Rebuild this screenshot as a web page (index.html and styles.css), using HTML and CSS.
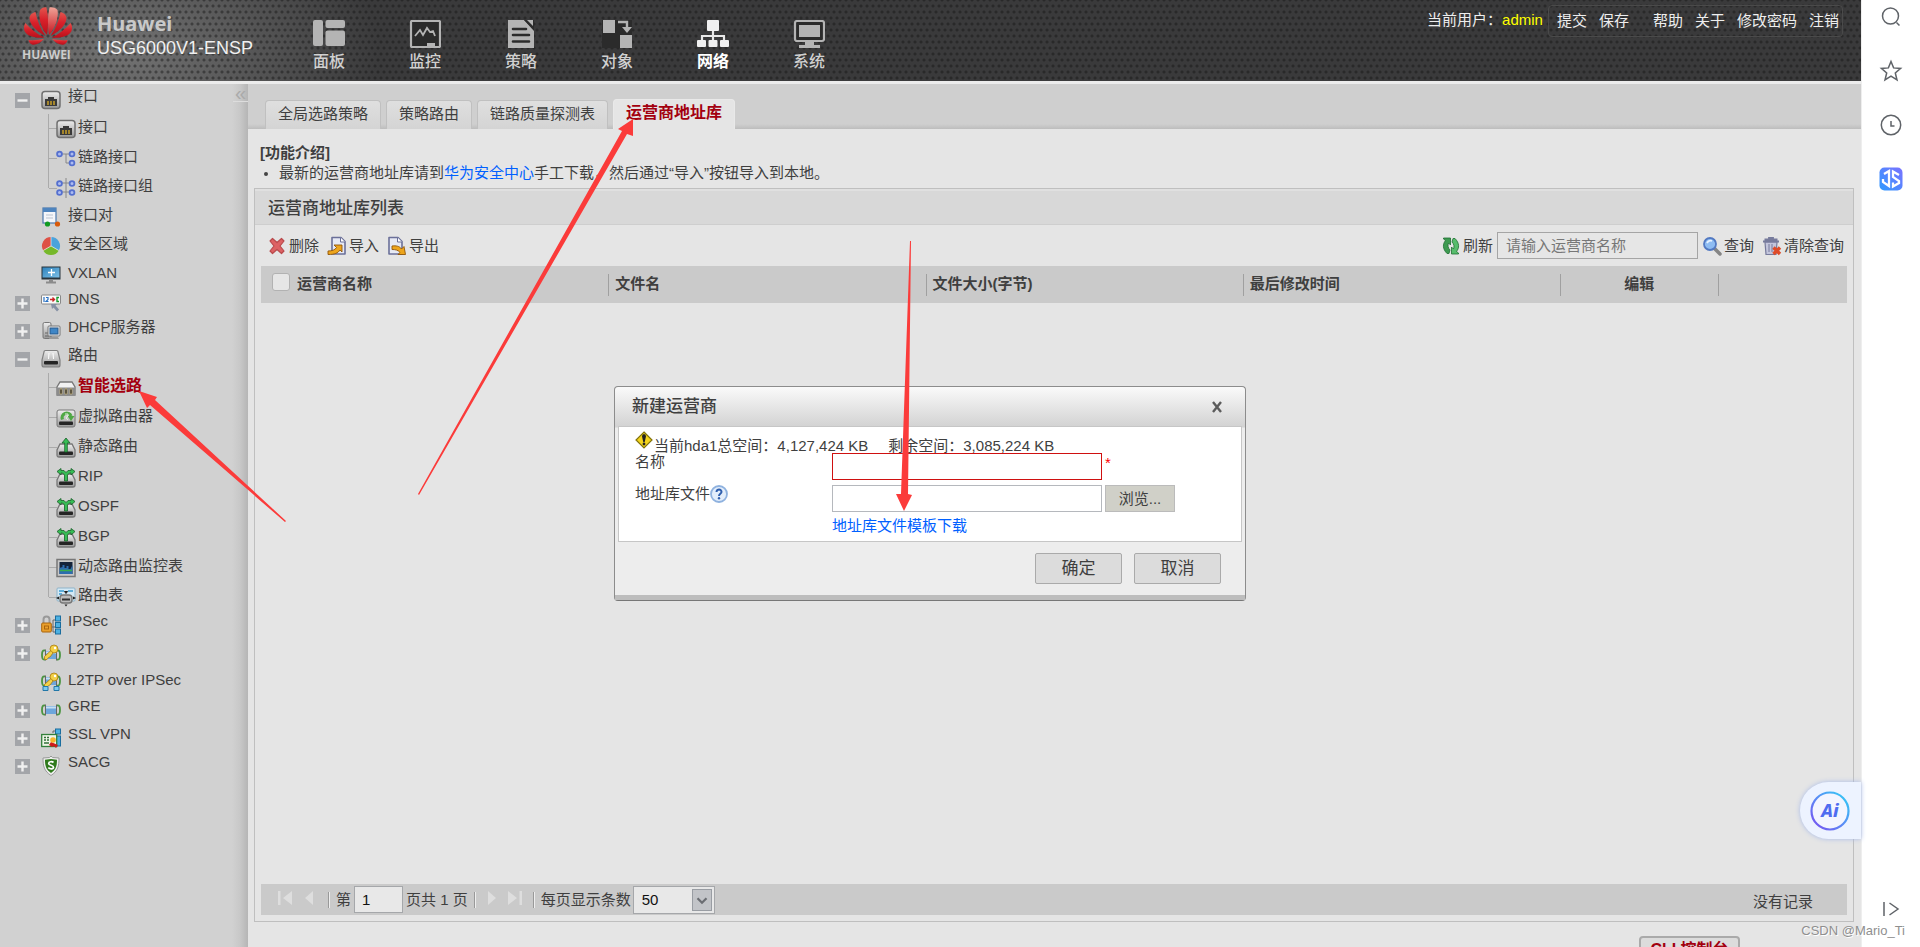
FILE: index.html
```html
<!DOCTYPE html>
<html lang="zh-CN">
<head>
<meta charset="utf-8">
<title>USG6000V1-ENSP</title>
<link rel="stylesheet" href="styles.css">
</head>
<body>
<svg class="defs" aria-hidden="true">
  <defs>
    <linearGradient id="petal" x1="0" y1="0" x2="0" y2="1"><stop offset="0" stop-color="#e2564f"/><stop offset=".45" stop-color="#d8202a"/><stop offset="1" stop-color="#b80f1a"/></linearGradient>
    <linearGradient id="petal-light" x1="0" y1="0" x2="0" y2="1"><stop offset="0" stop-color="#f0a397"/><stop offset="1" stop-color="#c8141f"/></linearGradient>
    <linearGradient id="metal" x1="0" y1="0" x2="0" y2="1"><stop offset="0" stop-color="#eee"/><stop offset="1" stop-color="#999"/></linearGradient>
    <linearGradient id="screen" x1="0" y1="0" x2="1" y2="1"><stop offset="0" stop-color="#2f83bd"/><stop offset="1" stop-color="#7cc0e8"/></linearGradient>
    <linearGradient id="ring" x1="0" y1="1" x2="1" y2="0"><stop offset="0" stop-color="#7a4df0"/><stop offset=".5" stop-color="#5a8cf5"/><stop offset="1" stop-color="#2fd0f5"/></linearGradient>
    <linearGradient id="js" x1="0" y1="1" x2="1" y2="0"><stop offset="0" stop-color="#2f9bff"/><stop offset="1" stop-color="#7b72ff"/></linearGradient>
  </defs>
  <symbol id="i-plus" viewBox="0 0 15 15"><rect width="15" height="15" fill="#a3a5a9"/><path d="M2.500 7.500h10M7.500 2.500v10" stroke="#f0f0f0" stroke-width="2.400"/></symbol>
  <symbol id="i-minus" viewBox="0 0 15 15"><rect width="15" height="15" fill="#a3a5a9"/><path d="M2.500 7.500h10" stroke="#f0f0f0" stroke-width="2.400"/></symbol>
  <symbol id="i-port" viewBox="0 0 20 20"><rect x="1" y="1.500" width="18" height="17" rx="3" fill="url(#metal)" stroke="#707070" stroke-width="1.500"/><path d="M4 16V9h3V7h6v2h3v7z" fill="#3a3a3a"/><path d="M7 11v4M10 11v4M13 11v4" stroke="#c9a028" stroke-width="1.500"/></symbol>
  <symbol id="i-link" viewBox="0 0 20 20"><path d="M4 5h12M10 5v9h6" fill="none" stroke="#888"/><g fill="#aebcf0" stroke="#5570cf" stroke-width="1.800"><circle cx="3.500" cy="5" r="2.400"/><circle cx="16" cy="5" r="2.400"/><circle cx="16" cy="14" r="2.400"/></g></symbol>
  <symbol id="i-links" viewBox="0 0 20 20"><path d="M10 0v20M4 5h12M4 14h12" stroke="#888"/><g fill="#aebcf0" stroke="#5570cf" stroke-width="1.800"><circle cx="3.500" cy="5.500" r="2.400"/><circle cx="16" cy="5.500" r="2.400"/><circle cx="3.500" cy="14.500" r="2.400"/><circle cx="16" cy="14.500" r="2.400"/></g></symbol>
  <symbol id="i-pair" viewBox="0 0 20 20"><rect x="2" y="1" width="13" height="15" fill="#f4f6fa" stroke="#4a78ad" stroke-width="1.200"/><path d="M2 1h13v4H2z" fill="#4e84be"/><path d="M5 8h7M5 11h7" stroke="#b9c2cf"/><circle cx="6.500" cy="17" r="2.600" fill="#0f9a20"/><circle cx="16.500" cy="17" r="2.600" fill="#d85a0a"/></symbol>
  <symbol id="i-zone" viewBox="0 0 20 20"><path d="M10 10V1a9 9 0 0 1 7.800 13.500z" fill="#4ba3dc"/><path d="M10 10l7.800 4.500a9 9 0 0 1-15.600 0z" fill="#76b82a"/><path d="M10 10l-7.800 4.500A9 9 0 0 1 10 1z" fill="#de5145"/><path d="M10 10V1M10 10l7.800 4.500M10 10l-7.800 4.500" stroke="#eee" stroke-width=".7"/></symbol>
  <symbol id="i-vx" viewBox="0 0 20 20"><rect x=".5" y="1.500" width="19" height="13" fill="#28343c"/><rect x="1.500" y="2.500" width="17" height="10" fill="url(#screen)"/><path d="M7 7.500h7M10.500 4v7" stroke="#fff" stroke-width="1.300"/><path d="M8 14.500h4v2h3v2H5v-2h3z" fill="#8b8b8b"/></symbol>
  <symbol id="i-dns" viewBox="0 0 20 20"><rect x=".5" y="2" width="19" height="9" rx="1" fill="#fafafa" stroke="#888"/><path d="M3 4v5M5 4.500h2v2l-2 2h2.500" fill="none" stroke="#2a72c5" stroke-width="1.200"/><path d="M9 6.500h4M11.500 4.500l2 2-2 2" fill="none" stroke="#c22" stroke-width="1.400"/><path d="M18 4.500h-2v4h2" fill="none" stroke="#1a9a2f" stroke-width="1.400"/><path d="M10 11l6 0-1.500 1.500 3.500 4-2 2-3.500-4L11 16z" fill="#8590a5"/></symbol>
  <symbol id="i-dhcp" viewBox="0 0 20 20"><rect x="2" y="1.500" width="8" height="16" rx="1.500" fill="url(#metal)" stroke="#777"/><path d="M4 12h4M4 15h4" stroke="#666"/><rect x="7" y="5" width="12" height="10" rx="1" fill="#ececec" stroke="#777"/><rect x="9" y="7" width="8" height="6" fill="#3f86c6" stroke="#29598a"/><path d="M9 16h8l1 2H8z" fill="#999"/></symbol>
  <symbol id="i-router" viewBox="0 0 20 20"><path d="M3 3q0-1.500 1.500-1.500h11Q17 1.500 17 3l2 8v5q0 2-2 2H3q-2 0-2-2v-5z" fill="url(#metal)" stroke="#808080" stroke-width="1.200"/><path d="M8 4l-.5 6M12 4l.5 6" stroke="#fff"/><rect x="3" y="12" width="14" height="3.500" rx="1" fill="#252525"/></symbol>
  <symbol id="i-smart" viewBox="0 0 20 20"><path d="M4 4h12l3 5v8H1V9z" fill="#f2f2f2" stroke="#777" stroke-width="1.300"/><path d="M1 9.500h18V17H1z" fill="#8c8c8c"/><path d="M4 16v-4l1-2 1 2v4zM9 16v-4l1-2 1 2v4zM14 16v-4l1-2 1 2v4z" fill="#222" stroke="#c9b478" stroke-width=".7"/></symbol>
  <symbol id="i-base" viewBox="0 0 20 20"><path d="M4 6h12l3 6v5q0 2-2 2H3q-2 0-2-2v-5z" fill="url(#metal)" stroke="#777" stroke-width="1.300"/><rect x="3" y="13.500" width="14" height="3.500" rx="1" fill="#252525"/></symbol>
  <symbol id="i-vr" viewBox="0 0 20 20"><rect x="1" y="2" width="18" height="17" rx="2" fill="url(#metal)" stroke="#777"/><rect x="3" y="13.500" width="14" height="3.500" rx="1" fill="#252525"/><path d="M6.500 11.500a4.500 4.500 0 1 1 8.500-3.500" fill="none" stroke="#4fa845" stroke-width="3.200"/><path d="M11.500 8h7L15 13z" fill="#4fa845"/><path d="M9 6h3v2l-2 2 2 2" fill="none" stroke="#dff3da"/></symbol>
  <symbol id="i-static" viewBox="0 0 20 20"><use href="#i-base"/><path d="M8.700 14V5H6l4-5 4 5h-2.700v9z" fill="#37bd55" stroke="#1b5d2a" stroke-width=".8"/></symbol>
  <symbol id="i-dyn" viewBox="0 0 20 20"><use href="#i-base"/><path d="M8.500 13V7L6.500 5H5v2L1 3.500 5 .5V2.500h3l2 2 2-2h3V.5l4 3L15 7V5h-1.500l-2 2v6z" fill="#37bd55" stroke="#1b5d2a" stroke-width=".8"/></symbol>
  <symbol id="i-mon" viewBox="0 0 20 20"><rect x="1" y="1.500" width="18" height="17" fill="#c8c8c8" stroke="#777" stroke-width="1.500"/><rect x="3.500" y="4" width="13" height="12" fill="#14233a"/><path d="M3.500 10l3-1V7h2v3h2V8h2v3h2l2-4v9h-13z" fill="#2d6dae"/><path d="M4 12.500h12" stroke="#3aae4a" stroke-width="1.500"/></symbol>
  <symbol id="i-table" viewBox="0 0 20 20"><rect x="1" y="1" width="18" height="13" rx="1" fill="#d4e9f5" stroke="#8eb3c9"/><path d="M3 4h5M12 4h5M3 7h3" stroke="#3a9ad0" stroke-width="1.500"/><path d="M8.500 4.500h3l-1.500 2z" stroke="#222" fill="#222"/><rect x="4" y="8" width="12" height="8" rx="3" fill="#bbb" stroke="#777" stroke-width="1.400"/><path d="M6 12.500h8" stroke="#333" stroke-width="2"/><path d="M0 11l3-1.500v3zM20 11l-3-1.500v3zM8.500 17.500h3L10 19.500z" fill="#222"/></symbol>
  <symbol id="i-ipsec" viewBox="0 0 20 20"><path d="M2.500 9V4.500a3 3 0 0 1 6 0V9" fill="none" stroke="#999" stroke-width="2"/><rect x=".7" y="8" width="9.600" height="9" rx="1" fill="#eaa02c" stroke="#a9640c"/><rect x="3.500" y="11" width="4" height="3" fill="none" stroke="#a9640c"/><path d="M11 12h3M12 5v12M12 5h2M12 17h2" fill="none" stroke="#666"/><g fill="#4db1e2" stroke="#1a6d9e"><rect x="14.500" y="1" width="5" height="5"/><rect x="14.500" y="7.500" width="5" height="5"/><rect x="14.500" y="14" width="5" height="5"/></g></symbol>
  <symbol id="i-pipe" viewBox="0 0 20 20"><rect x="4" y="6" width="12" height="8" fill="#6da6dc"/><path d="M4 7.500h12" stroke="#c5def3" stroke-width="2"/><path d="M4 5.500C1.500 5 1 7 1 10s.5 5 3 4.500M16 5.500c2.500-.5 3 1.500 3 4.500s-.5 5-3 4.500" fill="none" stroke="#4a9440" stroke-width="1.800"/><path d="M4.500 4.500v11M15.500 4.500v11" stroke="#666"/></symbol>
  <symbol id="i-key" viewBox="0 0 20 20"><circle cx="13" cy="6" r="4" fill="#f3d047" stroke="#a87b10" stroke-width=".8"/><circle cx="14" cy="5" r="1.200" fill="#fff"/><path d="M10 7.500L3.500 13.500v3h2.500l1.500-2 1.500-.5 3-4z" fill="#f3d047" stroke="#a87b10" stroke-width=".8"/></symbol>
  <symbol id="i-l2tp" viewBox="0 0 20 20"><use href="#i-pipe" y="2"/><use href="#i-key"/></symbol>
  <symbol id="i-l2ip" viewBox="0 0 20 20"><use href="#i-pipe" y="-1"/><use href="#i-key" y="-1"/><path d="M2 14.500h5v4H2zM13 14.500h5v4h-5z" fill="#7ccbef" stroke="#2277a8"/></symbol>
  <symbol id="i-ssl" viewBox="0 0 20 20"><g fill="#4db1e2" stroke="#1a6d9e"><rect x="14.500" y="1" width="5" height="5"/><rect x="14.500" y="8" width="5" height="10"/></g><path d="M12 5V3h2" stroke="#666" fill="none"/><rect x=".7" y="6.500" width="15" height="12" fill="#eef5e8" stroke="#33803b" stroke-width="1.300"/><path d="M3 9.500h2M6 9.500h2M3 12h2M6 12h2M3 15h5" stroke="#34703a" stroke-width="1.300"/><path d="M10 14l-2 3 3 2 2-1 2 2 2-3z" fill="#cf1c1c"/><circle cx="12" cy="12" r="2.800" fill="#f6b72c"/></symbol>
  <symbol id="i-sacg" viewBox="0 0 20 20"><path d="M10 0l1.500 1.500 6.500.5c0 8-1 13-8 17.500C3 15 2 10 2 2l6.500-.5z" fill="#eee" stroke="#999"/><path d="M10 3l6 .7c0 6-1 9.800-6 13.300-5-3.500-6-7.300-6-13.300z" fill="#2f7a1c"/><path d="M12.500 6.500C11 5.200 7.700 5.500 7.700 7.500S12.500 9 12.500 11.200 9 13.300 7.300 11.700" fill="none" stroke="#fff" stroke-width="1.700"/></symbol>
  <symbol id="i-del" viewBox="0 0 20 20"><path d="M3 5l2.500-2.500L10 6.500l4.500-4L17 5l-4 5 4 5-2.500 2.500-4.500-4-4.500 4L3 15l4-5z" fill="#dd6264" stroke="#b94a4c" stroke-width="1.200" stroke-linejoin="round"/></symbol>
  <symbol id="i-doc" viewBox="0 0 20 20"><path d="M5 1.500h9l4 4V18H5z" fill="#e6e9f4" stroke="#6b7099" stroke-width="1.600" stroke-linejoin="round"/><path d="M13.500 1.500V6H18" fill="#fff" stroke="#6b7099"/></symbol>
  <symbol id="i-imp" viewBox="0 0 20 20"><use href="#i-doc"/><path d="M1 15c4 0 7-1 8.500-3.500L7 9h8v7l-2-2c-2 3-5 4.500-12 4.500z" fill="#eda51c" stroke="#90560b" stroke-width=".9"/></symbol>
  <symbol id="i-exp" viewBox="0 0 20 20"><use href="#i-doc" x="-3"/><path d="M5 10c4-.5 7.500 0 9.500 3L17 10.500 18.500 18.500H11l2-2c-2-2.500-4.500-3-8-3z" fill="#eda51c" stroke="#90560b" stroke-width=".9"/></symbol>
  <symbol id="i-ref" viewBox="0 0 20 20"><path d="M8 17.500H6C1.500 13 1.500 8 4.500 4.500L2.500 3V2h7v7L7.500 7c-1 2.500-.5 5 1.500 7z" fill="#3d9a50" stroke="#1f6e32" stroke-width=".8"/><path d="M12 2.500h2C18.500 7 18.500 12 15.500 15.500l2 1.500v1h-7v-7l2 2c1-2.500.5-5-1.500-7z" fill="#57bd6c" stroke="#1f6e32" stroke-width=".8"/></symbol>
  <symbol id="i-find" viewBox="0 0 20 20"><path d="M12.500 12.500l5.500 5.500" stroke="#858585" stroke-width="3.500" stroke-linecap="round"/><circle cx="8" cy="8" r="6" fill="#8ebcf2" stroke="#5279c2" stroke-width="1.800"/><path d="M5 7a4 4 0 0 1 5-2" fill="none" stroke="#e9f3ff" stroke-width="1.800"/></symbol>
  <symbol id="i-trash" viewBox="0 0 20 20"><path d="M3 6h12l-1 12.500H4z" fill="#c3c5dc" stroke="#777b9c" stroke-width="1.200"/><path d="M1 5.500h16M7 3.500V2h4v1.500M2.500 3.500h13" fill="none" stroke="#777b9c" stroke-width="1.800"/><path d="M7 8v8M10 8v8" stroke="#777b9c"/><path d="M11.500 11.500l6.500 6.500M18 11.500L11.500 18" stroke="#df4b28" stroke-width="3.400"/></symbol>
</svg>

<div class="window">
  <div class="app">
    <header class="top">
      <svg class="logo" viewBox="0 0 50 40" role="img" aria-label="HUAWEI">
        <g fill="url(#petal)">
          <path d="M24 28C18 21 15 11 17 3c2-2.500 5-3 6.500-2.500C25.500 9 25.500 19 24 28z"/>
          <path fill="url(#petal-light)" d="M26 28C32 21 36 11 34.500 3c-2-2.500-6-3-8-2.500C24.500 9 24.500 19 26 28z"/>
          <path d="M22.500 29C14 25 6 17 6.500 10.500 7 7.500 10 5.500 12.500 5 14 13 17.500 22 22.500 29z"/>
          <path d="M27.500 29C36 25 44 17 43.500 10.500 43 7.500 40 5.500 37.500 5 36 13 32.500 22 27.500 29z"/>
          <path d="M21.500 30.500C13 31.500 4 29.500 1.500 24c-1-3-.5-6 .8-8C8 22.500 14.500 27.500 21.500 30.500z"/>
          <path d="M28.500 30.500C37 31.500 46 29.500 48.500 24c1-3 .5-6-.8-8C42 22.500 35.500 27.500 28.500 30.500z"/>
          <path d="M21 32c-3.500 4-8.500 6.500-12 5.500-2-1-3-2.500-3.500-4.500 5 .5 10.500 0 15.500-1zM29 32c3.500 4 8.500 6.500 12 5.500 2-1 3-2.500 3.500-4.500-5 .5-10.500 0-15.500-1z"/>
        </g>
      </svg>
      <div class="logo-word">HUAWEI</div>
      <div class="brand"><b>Huawei</b><span>USG6000V1-ENSP</span></div>
      <nav class="nav">
        <a href="#"><svg viewBox="0 0 32 28"><g fill="#b4b4b4"><rect width="10" height="26" rx="2"/><rect x="12.500" width="19.500" height="8" rx="2"/><rect x="12.500" y="10.500" width="19.500" height="15.500" rx="2"/></g></svg>面板</a>
        <a href="#"><svg viewBox="0 0 32 28"><rect x="2" y="1" width="29" height="26" rx="1" fill="#2b2b2b" stroke="#b4b4b4" stroke-width="2.200"/><path d="M6 16l5-6 3 5 4-7 3 4 3-1 2 5" fill="none" stroke="#b4b4b4" stroke-width="1.800"/><path d="M18 26v-3h8v3z" fill="#b4b4b4"/></svg>监控</a>
        <a href="#"><svg viewBox="0 0 32 28"><path d="M3 0h16l10 10v18H3z" fill="#b4b4b4"/><path d="M19 0l10 11V0z" fill="#2b2b2b"/><path d="M22 0h6v6z" fill="#b4b4b4"/><path d="M8 9h13M8 15h16M8 21.500h16" stroke="#2b2b2b" stroke-width="2.600" stroke-linecap="round"/></svg>策略</a>
        <a href="#"><svg viewBox="0 0 32 28"><rect x="1" width="30" height="28" fill="#2b2b2b"/><path d="M2 0h12v13H2zM19 15h12v13H19z" fill="#b4b4b4"/><path d="M17 2h9v6" fill="none" stroke="#b4b4b4" stroke-width="2.400"/><path d="M21 7h10l-5 6z" fill="#b4b4b4"/></svg>对象</a>
        <a href="#" class="on"><svg viewBox="0 0 32 28"><path d="M16 10v12M5 21v-5h22v5" fill="none" stroke="#e8e8e8" stroke-width="2.200"/><g fill="#f0f0f0"><rect x="10" width="12" height="11" rx="1"/><rect y="20" width="9" height="7" rx="1"/><rect x="11.500" y="20" width="9" height="7" rx="1"/><rect x="23" y="20" width="9" height="7" rx="1"/></g></svg>网络</a>
        <a href="#"><svg viewBox="0 0 32 28"><rect x="2" y="1" width="29" height="20" rx="2" fill="#2b2b2b" stroke="#b4b4b4" stroke-width="2.200"/><rect x="6" y="5" width="21" height="12" fill="#b4b4b4"/><path d="M12 21h9v4h6v3H6v-3h6z" fill="#b4b4b4"/></svg>系统</a>
      </nav>
      <div class="user"><span>当前用户：</span><span class="name">admin</span>
        <div class="links"><a href="#">提交</a><a href="#">保存</a><i></i><a href="#">帮助</a><a href="#">关于</a><a href="#">修改密码</a><a href="#">注销</a></div>
      </div>
    </header>

    <div class="work">
      <aside class="side">
        <button class="collapse" aria-label="收起">«</button>
        <ul class="tree">
          <li class="exp"><div class="row"><svg class="tg"><use href="#i-minus"/></svg><svg class="ic"><use href="#i-port"/></svg><a href="#">接口</a></div>
            <ul>
              <li><svg class="ic"><use href="#i-port"/></svg><a href="#">接口</a></li>
              <li><svg class="ic"><use href="#i-link"/></svg><a href="#">链路接口</a></li>
              <li><svg class="ic"><use href="#i-links"/></svg><a href="#">链路接口组</a></li>
            </ul></li>
          <li class="leaf"><div class="row"><svg class="ic"><use href="#i-pair"/></svg><a href="#">接口对</a></div></li>
          <li class="leaf"><div class="row"><svg class="ic"><use href="#i-zone"/></svg><a href="#">安全区域</a></div></li>
          <li class="leaf"><div class="row"><svg class="ic"><use href="#i-vx"/></svg><a href="#">VXLAN</a></div></li>
          <li class="exp"><div class="row"><svg class="tg"><use href="#i-plus"/></svg><svg class="ic"><use href="#i-dns"/></svg><a href="#">DNS</a></div></li>
          <li class="exp"><div class="row"><svg class="tg"><use href="#i-plus"/></svg><svg class="ic"><use href="#i-dhcp"/></svg><a href="#">DHCP服务器</a></div></li>
          <li class="exp"><div class="row"><svg class="tg"><use href="#i-minus"/></svg><svg class="ic"><use href="#i-router"/></svg><a href="#">路由</a></div>
            <ul>
              <li><svg class="ic"><use href="#i-smart"/></svg><a href="#" class="cur">智能选路</a></li>
              <li><svg class="ic"><use href="#i-vr"/></svg><a href="#">虚拟路由器</a></li>
              <li><svg class="ic"><use href="#i-static"/></svg><a href="#">静态路由</a></li>
              <li><svg class="ic"><use href="#i-dyn"/></svg><a href="#">RIP</a></li>
              <li><svg class="ic"><use href="#i-dyn"/></svg><a href="#">OSPF</a></li>
              <li><svg class="ic"><use href="#i-dyn"/></svg><a href="#">BGP</a></li>
              <li><svg class="ic"><use href="#i-mon"/></svg><a href="#">动态路由监控表</a></li>
              <li><svg class="ic"><use href="#i-table"/></svg><a href="#">路由表</a></li>
            </ul></li>
          <li class="exp"><div class="row"><svg class="tg"><use href="#i-plus"/></svg><svg class="ic"><use href="#i-ipsec"/></svg><a href="#">IPSec</a></div></li>
          <li class="exp"><div class="row"><svg class="tg"><use href="#i-plus"/></svg><svg class="ic"><use href="#i-l2tp"/></svg><a href="#">L2TP</a></div></li>
          <li class="leaf"><div class="row"><svg class="ic"><use href="#i-l2ip"/></svg><a href="#">L2TP over IPSec</a></div></li>
          <li class="exp"><div class="row"><svg class="tg"><use href="#i-plus"/></svg><svg class="ic"><use href="#i-pipe"/></svg><a href="#">GRE</a></div></li>
          <li class="exp"><div class="row"><svg class="tg"><use href="#i-plus"/></svg><svg class="ic"><use href="#i-ssl"/></svg><a href="#">SSL VPN</a></div></li>
          <li class="exp"><div class="row"><svg class="tg"><use href="#i-plus"/></svg><svg class="ic"><use href="#i-sacg"/></svg><a href="#">SACG</a></div></li>
        </ul>
      </aside>

      <main class="main">
        <div class="tabs"><button>全局选路策略</button><button>策略路由</button><button>链路质量探测表</button><button class="on">运营商地址库</button></div>
        <section class="intro">
          <b>[功能介绍]</b>
          <ul><li>最新的运营商地址库请到<a href="#">华为安全中心</a>手工下载，然后通过“导入”按钮导入到本地。</li></ul>
        </section>
        <section class="panel">
          <h2>运营商地址库列表</h2>
          <div class="tools">
            <button><svg class="ic"><use href="#i-del"/></svg>删除</button>
            <button><svg class="ic"><use href="#i-imp"/></svg>导入</button>
            <button><svg class="ic"><use href="#i-exp"/></svg>导出</button>
            <span class="grow"></span>
            <button><svg class="ic"><use href="#i-ref"/></svg>刷新</button>
            <input type="text" placeholder="请输入运营商名称" aria-label="运营商名称">
            <button><svg class="ic"><use href="#i-find"/></svg>查询</button>
            <button><svg class="ic"><use href="#i-trash"/></svg>清除查询</button>
          </div>
          <div class="grid">
            <table>
              <thead><tr><th class="c-name"><label><input type="checkbox">运营商名称</label></th><th class="c-file">文件名</th><th class="c-file">文件大小(字节)</th><th class="c-file">最后修改时间</th><th class="c-edit">编辑</th><th></th></tr></thead>
            </table>
          </div>
          <div class="pager">
            <button aria-label="首页"><svg viewBox="0 0 14 16"><path d="M0 1h2.500v14H0zM14 1v14L5 8z"/></svg></button>
            <button aria-label="上一页"><svg viewBox="0 0 14 16"><path d="M10 1v14L2 8z"/></svg></button>
            <i></i>
            <label for="page">第</label><input id="page" type="text" value="1"><span>页共 1 页</span>
            <i></i>
            <button aria-label="下一页"><svg viewBox="0 0 14 16"><path d="M3 1v14l8-7z"/></svg></button>
            <button aria-label="末页"><svg viewBox="0 0 14 16"><path d="M11.500 1H14v14h-2.500zM0 1v14l9-7z"/></svg></button>
            <i></i>
            <label for="size">每页显示条数</label>
            <span class="pick"><select id="size"><option>50</option></select><svg viewBox="0 0 20 20"><path d="M5 8l5 5 5-5" fill="none" stroke="#6b6e73" stroke-width="2.500"/></svg></span>
            <span class="grow"></span>
            <span class="none">没有记录</span>
          </div>
        </section>
        <footer class="foot"><button>CLI 控制台</button></footer>
      </main>
    </div>

    <div class="overlay">
      <form class="dialog">
        <div class="d-head"><h3>新建运营商</h3><button type="button" aria-label="关闭"><svg viewBox="0 0 12 12"><path d="M2 1l8 10M10 1L2 11" stroke="#5c5c5c" stroke-width="2.400"/></svg></button></div>
        <div class="d-body">
          <p class="space"><svg class="warn" viewBox="0 0 18 18"><path d="M9 1l8 8-8 8-8-8z" fill="#f4d41c" stroke="#82720c" stroke-width="1.200"/><path d="M7 5.500a2 2.500 0 0 1 4 0L9.700 11H8.300z" fill="#222"/><circle cx="9" cy="13" r="1.400" fill="#222"/></svg><span>当前hda1总空间：4,127,424 KB</span><span class="left">剩余空间：3,085,224 KB</span></p>
          <div class="line"><label for="isp">名称</label><input id="isp" class="bad" type="text"><em>*</em></div>
          <div class="line"><label for="file">地址库文件<svg class="help" viewBox="0 0 18 18"><circle cx="9" cy="9" r="8" fill="#e3eefb" stroke="#8fb2df" stroke-width="1.800"/><path d="M6.500 7c0-3.400 5.200-3.200 5 0-.2 1.800-2.500 1.800-2.500 4" fill="none" stroke="#2f5fae" stroke-width="2"/><circle cx="9" cy="13.300" r="1.200" fill="#2f5fae"/></svg></label><input id="file" type="text"><button type="button">浏览...</button></div>
          <a class="tpl" href="#">地址库文件模板下载</a>
        </div>
        <div class="d-foot"><button type="button">确定</button><button type="button">取消</button></div>
      </form>
    </div>
    <button class="ai" aria-label="Ai"><svg viewBox="0 0 40 40"><circle cx="20" cy="20" r="18.500" fill="#f3f5ff" stroke="url(#ring)" stroke-width="2.200"/></svg><span>Ai</span></button>
  </div>

  <aside class="rail">
    <button aria-label="搜索"><svg viewBox="0 0 24 24"><circle cx="11.500" cy="11" r="8" /><path d="M17.500 17.500l3 3"/></svg></button>
    <button aria-label="收藏"><svg viewBox="0 0 24 24"><path d="M12 2.500l2.600 6.400 7 .5-5.300 4.500 1.700 7.100L12 17.200 6 21l1.700-7.100-5.300-4.500 7-.5z"/></svg></button>
    <button aria-label="历史"><svg viewBox="0 0 24 24"><circle cx="12" cy="12" r="9.700"/><path d="M12 8v5h3.500"/></svg></button>
    <button aria-label="JS"><svg viewBox="0 0 24 24"><rect x=".5" y=".5" width="23" height="23" rx="5" fill="url(#js)" stroke="none"/><path d="M5 7l5-3v15l-6-4v-3M20 8l-6-3.500V10l6 4v2l-6 3.500v-4" stroke="#fff" stroke-width="2.300"/></svg></button>
    <span class="grow"></span>
    <button aria-label="收起侧栏"><svg viewBox="0 0 24 24"><path d="M5 5v14M10.500 6l8.500 6-8.500 6"/></svg></button>
  </aside>

  <svg class="arrows" viewBox="0 0 1920 947" aria-hidden="true">
    <path d="M139 391l18 6-2 3 131 121-1 1L150 405l-3 3z"/>
    <path d="M633 119v17l-6-2-208 361-1-1 204-363-4-2z"/>
    <path d="M910 241h1l-3 253 4 1-8 16-8-17 5 0z"/>
  </svg>
  <div class="mark">CSDN @Mario_Ti</div>
</div>
</body>
</html>
```

FILE: styles.css
```css
* { box-sizing: border-box; }
body {
  margin: 0;
  font: 15px/20px "Liberation Sans", "Noto Sans CJK SC", sans-serif;
  color: #3f3f3f;
}
button, input, select { font: inherit; color: inherit; margin: 0; }
button { background: none; border: 0; padding: 0; }
a { color: inherit; text-decoration: none; }
ul { list-style: none; margin: 0; padding: 0; }
h2, h3, p { margin: 0; }
svg { display: block; flex: none; }
.defs { position: absolute; width: 0; height: 0; }
.ic { width: 20px; height: 20px; }
.tg { width: 15px; height: 15px; }
.grow { flex: 1; }

.window { position: relative; display: flex; height: 100vh; overflow: hidden; }
.app { position: relative; flex: 1; min-width: 0; display: flex; flex-direction: column; background: #e5e5e5; }

/* header */
.top {
  display: grid;
  grid-template-columns: 97px 184px 1fr auto;
  grid-template-rows: 50px 31px;
  background:
    radial-gradient(circle, rgba(20,20,20,.45) 1px, transparent 2px) 0 0 / 6px 12px,
    radial-gradient(circle, rgba(20,20,20,.45) 1px, transparent 2px) 3px 6px / 6px 12px,
    radial-gradient(ellipse 260px 150px at 120px 50px, #747474, #3a3a3b);
}
.logo { grid-area: 1 / 1; width: 50px; height: 40px; margin: 7px 0 0 23px; }
.logo-word { grid-area: 2 / 1; padding-left: 22px; font: 700 12px/10px "Open Sans", sans-serif; color: #ccc; }
.brand { grid-area: 1 / 2 / 3 / 3; display: flex; flex-direction: column; padding-top: 12px; color: #f0f0f0; white-space: nowrap; }
.brand b { font: 700 20px/24px "Noto Sans", sans-serif; color: #c9c9c9; }
.brand span { font-size: 18px; line-height: 24px; }
.nav { grid-area: 1 / 3 / 3 / 4; display: flex; }
.nav a { width: 96px; display: flex; flex-direction: column; align-items: center; padding-top: 20px; font-weight: 500; font-size: 16px; line-height: 28px; color: #d0d0d0; }
.nav svg { width: 32px; height: 28px; }
.nav .on { color: #fff; font-weight: 700; }
.user { grid-area: 1 / 4; display: flex; align-items: flex-start; padding: 5px 18px 0 0; line-height: 30px; color: #eee; white-space: nowrap; }
.user .name { color: #ff0; margin-right: 5px; }
.links { display: flex; gap: 12px; padding: 0 3px 0 8px; border: 1px solid #4a4a4a; border-radius: 4px; }

.work { flex: 1; min-height: 0; display: flex; border-top: 3px solid #ececec; }

/* navigation tree */
.side { position: relative; width: 248px; flex: none; background: linear-gradient(90deg, #d1d1d1 232px, #c8c8c8 240px, #b5b5b5); }
.collapse { position: absolute; right: 0; top: 0; width: 15px; height: 18px; color: #aaa; font-size: 20px; line-height: 14px; border-bottom: 1px solid #ddd; }
.tree { padding-top: 2px; white-space: nowrap; }
.row { display: flex; align-items: center; gap: 7px; padding-left: 41px; height: 28px; }
.leaf .row { height: 29px; }
.leaf .row a { padding-bottom: 4px; }
.exp .row { padding-left: 15px; }
.exp .tg { margin-right: 4px; }
.exp .row a { padding-bottom: 8px; }
.exp li { display: flex; align-items: center; gap: 2px; height: 30px; padding-left: 56px; background: linear-gradient(90deg, #aaa 0 1px, transparent 1px) 48px 0 / 1px 100% no-repeat, linear-gradient(#aaa, #aaa) 49px 14px / 8px 1px no-repeat; }
.exp li:last-child { height: 28px; background-size: 1px 14px, 8px 1px; }
.exp li a { padding-bottom: 4px; }
.tree .cur { color: #a3000f; font-weight: 700; font-size: 16px; }

/* content */
.main { flex: 1; min-width: 0; display: flex; flex-direction: column; }
.tabs { display: flex; align-items: flex-end; gap: 5px; height: 45px; padding-left: 17px; background: linear-gradient(#cfcfcf 40px, #bdbdbd); }
.tabs button { height: 29px; padding: 0 12px 3px; border: 1px solid #c0c0c0; border-bottom: 0; border-radius: 4px 4px 0 0; background: linear-gradient(#dfdfdf, #d4d4d4); }
.tabs .on { height: 30px; background: #e5e5e5; border-color: #e9e9e9; color: #a3000f; font-weight: 700; font-size: 16px; }
.intro { padding: 14px 12px 5px; }
.intro b { font-weight: 700; }
.intro li { position: relative; padding-left: 19px; }
.intro li::before { content: ""; position: absolute; left: 4px; top: 9px; width: 4px; height: 4px; border-radius: 50%; background: #444; }
.intro li a { color: #0060ff; }
.panel { flex: 1; min-height: 0; display: flex; flex-direction: column; margin: 0 7px 0 6px; border: 1px solid #bfbfbf; }
.panel h2 { height: 36px; padding-left: 13px; font-weight: 500; font-size: 17px; line-height: 36px; background: #d8d8d8; border-top: 2px solid #e0e0e0; border-bottom: 1px solid #cecece; }
.tools { display: flex; align-items: center; height: 41px; padding: 0 9px 0 12px; gap: 8px; }
.tools button { display: flex; align-items: center; gap: 2px; }
.tools input { width: 201px; height: 27px; margin: 0 -4px; padding: 0 8px; border: 1px solid #a5a5a5; background: #e6e6e6; }
.tools input::placeholder { color: #777; opacity: 1; }
.grid { flex: 1; min-height: 0; padding: 0 6px; }
table { width: 100%; table-layout: fixed; border-collapse: collapse; background: #cacaca; }
th { height: 37px; padding: 0 0 2px 7px; text-align: left; background: linear-gradient(#a0a0a0, #a0a0a0) 0 50% / 1px 22px no-repeat; }
.c-name { width: 21.9%; padding-left: 11px; background: none; }
.c-file { width: 20%; }
.c-edit { width: 10%; text-align: center; padding-left: 0; }
.c-name label { display: flex; align-items: center; gap: 7px; }
input[type="checkbox"] { appearance: none; width: 18px; height: 18px; margin-bottom: 3px; border: 1px solid #b2b2b2; border-radius: 3px; background: #e6e6e6; }
.pager { display: flex; align-items: center; height: 31px; margin: 0 6px 6px; padding: 0 34px 0 17px; background: #cacaca; white-space: nowrap; }
.pager button { padding-bottom: 4px; margin-right: 11px; }
.pager button svg { width: 14px; height: 16px; fill: #dedede; }
.pager i { width: 2px; height: 16px; border-left: 1px solid #999; border-right: 1px solid #eee; margin-right: 6px; }
.pager input { width: 49px; height: 27px; margin: 0 3px; padding: 0 7px; border: 1px solid #a5a7aa; background: #e8e8e8; color: #111; }
.pager span + i { margin: 0 9px 0 6px; }
.pager span + i + button { margin-right: 9px; }
.pick { position: relative; margin-left: 2px; }
.pick select { appearance: none; display: block; width: 82px; height: 28px; padding: 0 8px; border: 1px solid #a5a7aa; border-radius: 0; background: #e8e8e8; color: #111; }
.pick svg { position: absolute; right: 3px; top: 3px; width: 20px; height: 22px; background: #c2c4c8; border: 1px solid #999da3; pointer-events: none; }
.pager .none { padding-top: 5px; }
.foot { height: 25px; padding: 14px 121px 0 0; display: flex; justify-content: flex-end; overflow: hidden; }
.foot button { flex: none; width: 101px; height: 28px; border: 2px solid #aaa; border-radius: 4px; background: #dcdcdc; color: #a3000f; font-weight: 700; font-size: 16px; line-height: 20px; }

/* dialog */
.overlay { position: absolute; inset: 0; display: flex; align-items: center; justify-content: center; padding: 40px 1px 0 0; }
.dialog { width: 632px; padding: 0 3px; border: 1px solid #8c8c8c; border-bottom-color: #777; border-radius: 4px; background: linear-gradient(#fafafa, #d2d2d2 40px, #ededed 41px); }
.d-head { display: flex; justify-content: space-between; align-items: center; height: 39px; padding: 1px 19px 0 14px; }
.d-head h3 { font-size: 17px; font-weight: 500; }
.d-head svg { width: 12px; height: 12px; }
.d-body { height: 116px; padding: 4px 16px 0; background: #fff; border: 1px solid #c6c6c6; }
.space { display: flex; align-items: flex-end; height: 22px; white-space: nowrap; }
.warn { width: 18px; height: 18px; margin: 0 1px 4px 0; }
.space span { margin-bottom: -3px; }
.space .left { margin-left: 20px; }
.line { display: flex; height: 32px; }
.line label { display: flex; width: 197px; height: 18px; line-height: 18px; }
.help { width: 18px; height: 18px; }
.line input { width: 270px; height: 27px; border: 1px solid #b5b8bd; background: #fff; }
.line .bad { border-color: #cf1010; }
.line em { color: red; font-style: normal; margin-left: 3px; }
.line button { width: 70px; height: 27px; margin-left: 3px; border: 1px solid #bbb; background: #d0d0c8; }
.tpl { display: block; margin-left: 197px; color: #0060ff; line-height: 18px; }
.d-foot { display: flex; justify-content: flex-end; align-items: flex-start; gap: 12px; height: 58px; padding: 11px 24px 0 0; margin: 0 -3px; border-bottom: 5px solid #bdbdbd; }
.d-foot button { width: 87px; height: 31px; border: 1px solid #aaa; border-radius: 2px; background: #dcdcdc; font-size: 17px; }

.ai { position: absolute; right: 0; bottom: 108px; width: 61px; height: 57px; padding-left: 10px; border-radius: 29px 0 0 29px; background: #edf3ff; box-shadow: 0 0 5px #a9bbe8; }
.ai svg { width: 40px; height: 40px; }
.ai span { position: absolute; left: 10px; top: 18px; width: 40px; text-align: center; font: italic 800 18px/20px "Noto Sans", sans-serif; color: #4f6cf0; }

/* browser rail */
.rail { width: 59px; flex: none; display: flex; flex-direction: column; align-items: center; gap: 30px; padding: 5px 0 26px; background: #fff; border-left: 1px solid #eee; }
.rail svg { width: 24px; height: 24px; fill: none; stroke: #5f6368; stroke-width: 1.5px; }

.arrows { position: absolute; left: 0; top: 0; width: 1920px; height: 947px; fill: #fb3b3a; pointer-events: none; }
.mark { position: absolute; right: 15px; bottom: 6px; font-size: 13px; color: #8f8f8f; text-shadow: 1px 1px 0 #fff; }
```
